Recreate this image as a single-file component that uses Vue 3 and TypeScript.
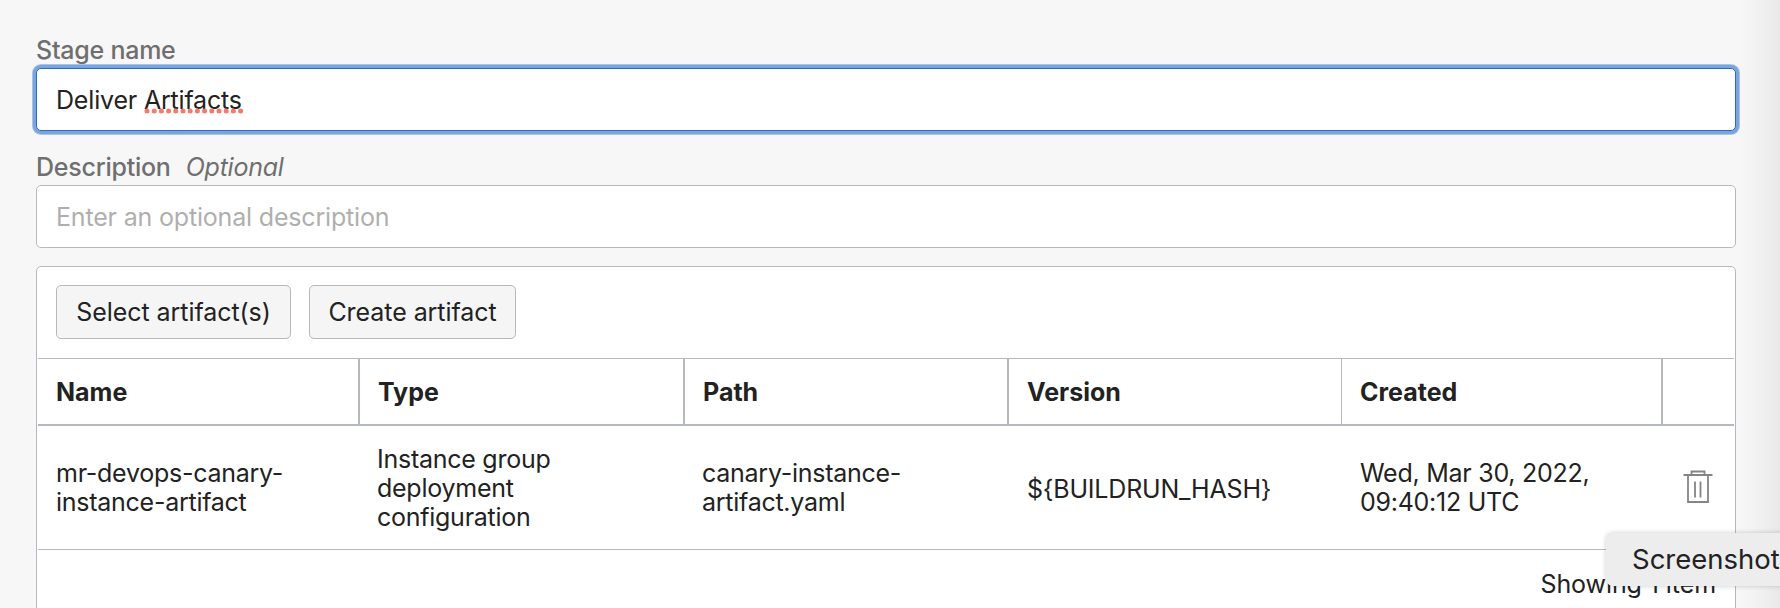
<script setup lang="ts">
interface Artifact {
  name: string[]
  type: string[]
  path: string[]
  version: string
  created: string[]
}

const columns: string[] = ['Name', 'Type', 'Path', 'Version', 'Created']

const artifacts: Artifact[] = [
  {
    name: ['mr-devops-canary-', 'instance-artifact'],
    type: ['Instance group', 'deployment', 'configuration'],
    path: ['canary-instance-', 'artifact.yaml'],
    version: '${BUILDRUN_HASH}',
    created: ['Wed, Mar 30, 2022,', '09:40:12 UTC'],
  },
]
</script>

<template>
  <main class="page">
    <form class="form">
      <label class="label stage-label">Stage name</label>
      <div class="field focused">
        <span class="value">Deliver <span class="misspelled">Artifacts<svg class="squiggle" width="99" height="6" viewBox="0 0 99 6"><line x1="3" y1="3" x2="98" y2="3" /></svg></span></span>
      </div>
      <label class="label description-label">Description <em>Optional</em></label>
      <div class="field"><span class="placeholder">Enter an optional description</span></div>

      <section class="panel">
        <div class="toolbar">
          <button type="button" class="select">Select artifact(s)</button>
          <button type="button" class="create">Create artifact</button>
        </div>
        <div class="row head">
          <div v-for="column in columns" :key="column" class="cell" :class="column.toLowerCase()">{{ column }}</div>
          <div class="cell"></div>
        </div>
        <div v-for="item in artifacts" :key="item.version" class="row body">
          <div class="cell c-name"><span v-for="line in item.name" :key="line">{{ line }}</span></div>
          <div class="cell c-type"><span v-for="line in item.type" :key="line">{{ line }}</span></div>
          <div class="cell c-path"><span v-for="line in item.path" :key="line">{{ line }}</span></div>
          <div class="cell c-version"><span>{{ item.version }}</span></div>
          <div class="cell c-created"><span v-for="line in item.created" :key="line">{{ line }}</span></div>
          <div class="cell c-action">
            <svg class="trash" width="30" height="34" viewBox="0 0 30 34">
              <path d="M8.5 5V1.5H21.5V5M0.5 5H29.5M5 5V32H25V5M12 11.5V27.5M17.5 11.5V27.5" />
            </svg>
          </div>
        </div>
        <div class="footer">Showing 1 item</div>
      </section>
    </form>
    <div class="edge"></div>
    <div class="tooltip">Screenshot</div>
  </main>
</template>

<style>
body {
  background: #f7f7f7;
  overflow: hidden;
}
</style>

<style scoped>
.page {
  position: relative;
  box-sizing: border-box;
  width: 1780px;
  height: 608px;
  overflow: hidden;
  background: #f7f7f7;
  color: #222;
  font-family: Inter, "Liberation Sans", sans-serif;
  font-size: 25px;
  line-height: 29px;
  white-space: nowrap;
}
.form {
  display: flex;
  flex-direction: column;
  width: 1700px;
  padding: 36px 0 0 36px;
}
.label {
  display: flex;
  box-sizing: border-box;
  color: #6f6f6f;
  font-weight: 500;
  letter-spacing: -0.24px;
}
.stage-label {
  height: 32px;
}
.description-label {
  height: 54px;
  padding-top: 22px;
}
.description-label em {
  margin-left: 15px;
  font-weight: 400;
}
.field {
  display: flex;
  align-items: center;
  flex: none;
  box-sizing: border-box;
  height: 63px;
  padding: 2px 19px 0;
  border: 1px solid #b5b8be;
  border-radius: 5px;
  background: #fff;
  letter-spacing: -0.18px;
}
.focused {
  position: relative;
  z-index: 1;
  border-color: #276cc5;
  box-shadow: 0 0 0 3px #7ba3dd, 0 0 0 4px #a9c4ea;
}
.placeholder {
  color: #afafaf;
}
.misspelled {
  position: relative;
}
.squiggle {
  position: absolute;
  left: 0;
  bottom: 1px;
}
.squiggle line {
  stroke: #f47a6d;
  stroke-width: 5;
  stroke-linecap: round;
  stroke-dasharray: 0 7.2;
}
.panel {
  box-sizing: border-box;
  height: 400px;
  margin-top: 18px;
  border: 1px solid #b5b8be;
  border-radius: 5px;
  background: #fff;
}
.toolbar {
  display: flex;
  gap: 18px;
  box-sizing: border-box;
  height: 91px;
  padding: 18px 19px;
}
button {
  box-sizing: border-box;
  height: 54px;
  padding: 0;
  border: 1px solid #b5b8be;
  border-radius: 5px;
  background: #f5f5f5;
  color: #222;
  font: inherit;
  letter-spacing: -0.06px;
}
.select {
  width: 235px;
}
.create {
  width: 207px;
}
.row {
  display: grid;
  grid-template-columns: 322px 325px 324px 333px 321px 71px;
  box-sizing: border-box;
  margin: 0 1px;
  border-top: 1px solid #b5b8be;
}
.head {
  height: 66px;
  font-weight: 700;
}
.head .cell {
  display: flex;
  align-items: center;
  padding: 2px 0 0 18px;
  border-right: 2px solid #b5b8be;
}
.head .version {
  border-right-width: 1px;
}
.head .cell:last-child {
  border-right: 0;
}
.body {
  height: 126px;
  border-top-width: 2px;
  border-bottom: 1px solid #b5b8be;
  letter-spacing: -0.26px;
}
.body .cell {
  display: flex;
  flex-direction: column;
  justify-content: center;
  padding: 1px 0 0 18px;
}
.body .c-type,
.body .c-path {
  padding-left: 17px;
}
.body .c-version {
  padding-top: 3px;
  letter-spacing: -0.2px;
}
.trash {
  margin: -3px 0 0 2px;
  fill: none;
  stroke: #858585;
  stroke-width: 1.8;
}
.footer {
  padding: 20px 19px 0;
  text-align: right;
  letter-spacing: -0.08px;
}
.edge {
  position: absolute;
  top: 0;
  right: 0;
  width: 44px;
  height: 608px;
  background: linear-gradient(90deg, transparent, rgba(0, 0, 0, 0.015) 40%, rgba(0, 0, 0, 0.06));
}
.tooltip {
  position: absolute;
  top: 533px;
  left: 1606px;
  box-sizing: border-box;
  width: 190px;
  height: 53px;
  padding: 0 0 0 26px;
  border-radius: 7px;
  background: #ededee;
  box-shadow: 0 0 5px rgba(0, 0, 0, 0.2);
  font-size: 27.5px;
  line-height: 53px;
}
</style>
